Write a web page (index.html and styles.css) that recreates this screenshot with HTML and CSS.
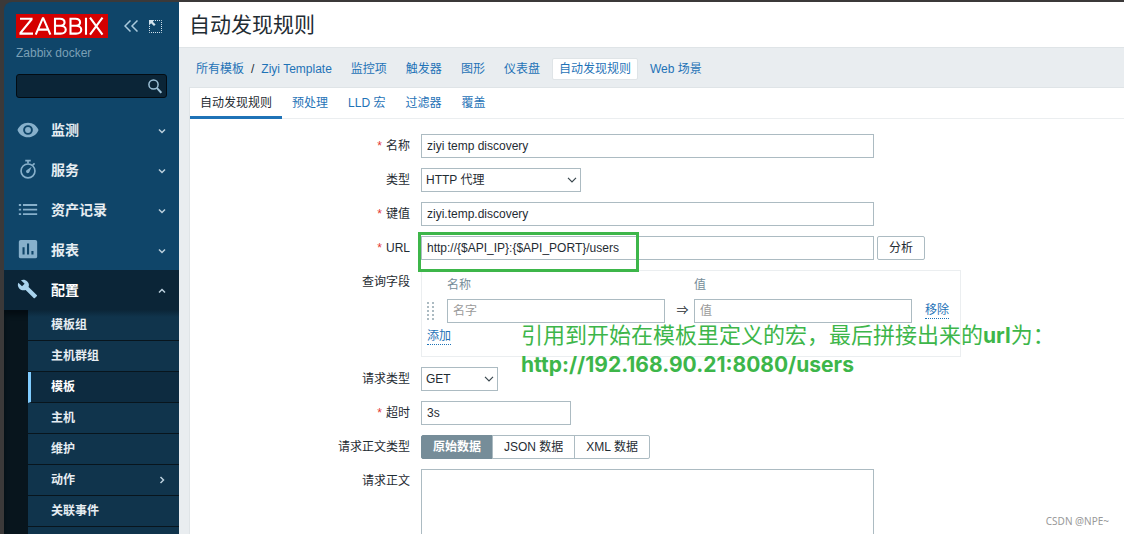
FILE: index.html
```html
<!DOCTYPE html>
<html lang="zh-CN">
<head>
<meta charset="utf-8">
<meta name="viewport" content="width=device-width, initial-scale=1">
<title>自动发现规则</title>
<link rel="stylesheet" href="styles.css">
</head>
<body>
<div class="app">
  <aside class="sidebar">
    <div class="brand">
      <a class="logo" href="#" aria-label="Zabbix">
        <svg width="92" height="24" viewBox="0 0 92 24" fill="none" stroke="#fff" stroke-width="2.1">
          <rect width="92" height="24" fill="#d40000" stroke="none"/>
          <path d="M4 4.700H15.500V5.500L4.500 18.800V19.600H17"/>
          <path d="M19.700 20.700L26.800 4.200H27.300L34.400 20.700M22.300 15.600H31.800"/>
          <path d="M39 4.700V19.600H44.500C51.500 19.600 51.500 11.800 44.500 11.800H39M44.500 11.800C50 11.800 50 4.700 44 4.700H38"/>
          <path d="M54.500 4.700V19.600H60C67 19.600 67 11.800 60 11.800H54.500M60 11.800C65.500 11.800 65.500 4.700 59.500 4.700H53.500"/>
          <path d="M70 3.700V20.700M74 3.700L86.500 20.700M86.500 3.700L74 20.700"/>
        </svg>
      </a>
      <button class="icon-button" aria-label="折叠">
        <svg width="14" height="12" viewBox="0 0 14 12" fill="none" stroke="#a9c9dc" stroke-width="1.500"><path d="M6.500 .5L1 6L6.500 11.500M13.500 .5L8 6L13.500 11.500"/></svg>
      </button>
      <button class="icon-button" aria-label="隐藏">
        <svg width="13" height="13" viewBox="0 0 13 13"><path d="M6 .5H12.500V12.500H.5V6" fill="none" stroke="#d2e2ec" stroke-dasharray="1 1"/><path d="M0 0H5.500L3.800 1.700L6.600 4.500L5 6L2.100 3.300L0 5.500Z" fill="#d2e2ec"/></svg>
      </button>
    </div>
    <div class="server">Zabbix docker</div>
    <form class="search">
      <input type="text" aria-label="搜索">
      <button class="icon-button" type="button" aria-label="搜索">
        <svg width="14" height="15" viewBox="0 0 14 15" fill="none" stroke="#9cc0d6"><circle cx="5.500" cy="5.500" r="4.600" stroke-width="1.500"/><path d="M8.800 8.900L13.300 13.800" stroke-width="2"/></svg>
      </button>
    </form>
    <nav class="menu">
      <a class="menu-item" href="#">
        <svg class="menu-icon" viewBox="0 0 24 24" fill="#87b0cb"><path d="M12 4C6.500 4 2.200 7.500 .5 12C2.200 16.500 6.500 20 12 20S21.800 16.500 23.500 12C21.800 7.500 17.500 4 12 4ZM12 17.300A5.300 5.300 0 1 1 12 6.700A5.300 5.300 0 0 1 12 17.300Z" fill-rule="evenodd"/><circle cx="12" cy="12" r="3.200"/></svg>
        <span>监测</span><svg class="caret" viewBox="0 0 8 8"><path d="M1 3.500L4 6.500L7 3.500"/></svg>
      </a>
      <a class="menu-item" href="#">
        <svg class="menu-icon" viewBox="0 0 24 24" fill="none" stroke="#87b0cb" stroke-width="1.800"><circle cx="12" cy="13" r="7.600"/><path d="M9 1.800H15M12 2V5M17 6.800L19.200 4.800"/><path d="M16 8.500L13.500 14.300A1.900 1.900 0 1 1 10.800 11.900Z" fill="#87b0cb" stroke="none"/></svg>
        <span>服务</span><svg class="caret" viewBox="0 0 8 8"><path d="M1 3.500L4 6.500L7 3.500"/></svg>
      </a>
      <a class="menu-item" href="#">
        <svg class="menu-icon" viewBox="0 0 24 24" fill="#87b0cb"><path d="M2 5.500H4.500V7.500H2ZM6.500 5.500H22V7.500H6.500ZM2 10.500H4.500V12.500H2ZM6.500 10.500H22V12.500H6.500ZM2 15.500H4.500V17.500H2ZM6.500 15.500H22V17.500H6.500Z"/></svg>
        <span>资产记录</span><svg class="caret" viewBox="0 0 8 8"><path d="M1 3.500L4 6.500L7 3.500"/></svg>
      </a>
      <a class="menu-item" href="#">
        <svg class="menu-icon" viewBox="0 0 24 24" fill="#87b0cb"><rect x="2" y="1" width="20" height="20" rx="2"/><path d="M6 9H8.300V17H6ZM10.900 5H13.200V17H10.900ZM15.700 13H18V17H15.700Z" fill="#0f4569"/></svg>
        <span>报表</span><svg class="caret" viewBox="0 0 8 8"><path d="M1 3.500L4 6.500L7 3.500"/></svg>
      </a>
      <a class="menu-item menu-item-open" href="#">
        <svg class="menu-icon" viewBox="0 0 24 24" fill="#a9d4ee"><path d="M21.500 17.500L12.600 8.700C13.500 6.400 13 4.300 11.200 2.600C9.300 .7 6.500 .4 4.300 1.400L8.300 5.200L5.500 8L1.500 4.100C.4 6.400 .9 8.700 2.700 10.500C4.500 12.300 7.100 12.700 9.400 11.900L18.200 20.700C18.600 21.100 19.200 21.100 19.600 20.700L21.500 18.800C22 18.500 22 17.900 21.500 17.500Z"/></svg>
        <span>配置</span><svg class="caret" viewBox="0 0 8 8"><path d="M1 6.500L4 3.500L7 6.500"/></svg>
      </a>
      <div class="submenu">
        <a href="#">模板组</a>
        <a href="#">主机群组</a>
        <a class="current" href="#">模板</a>
        <a href="#">主机</a>
        <a href="#">维护</a>
        <a href="#">动作<svg class="caret" viewBox="0 0 8 8"><path d="M2.500 1L5.500 4L2.500 7"/></svg></a>
        <a href="#">关联事件</a>
        <div class="submenu-rest"></div>
      </div>
    </nav>
  </aside>

  <main class="main">
    <header class="page-header"><h1>自动发现规则</h1></header>
    <nav class="crumbs">
      <div class="path"><a href="#">所有模板</a><span>/</span><a href="#">Ziyi Template</a></div>
      <a href="#">监控项</a>
      <a href="#">触发器</a>
      <a href="#">图形</a>
      <a href="#">仪表盘</a>
      <a class="selected" href="#">自动发现规则</a>
      <a href="#">Web 场景</a>
    </nav>
    <section class="panel">
      <nav class="tabs">
        <a class="active" href="#">自动发现规则</a>
        <a href="#">预处理</a>
        <a href="#">LLD 宏</a>
        <a href="#">过滤器</a>
        <a href="#">覆盖</a>
      </nav>
      <form class="form">
        <label class="required" for="name">名称</label>
        <div class="field"><input class="box wide" id="name" type="text" value="ziyi temp discovery"></div>

        <label for="type">类型</label>
        <div class="field"><div class="select type-select"><select id="type"><option>HTTP 代理</option></select><svg viewBox="0 0 10 6"><path d="M1 .8L5 4.800L9 .8"/></svg></div></div>

        <label class="required" for="key">键值</label>
        <div class="field"><input class="box wide" id="key" type="text" value="ziyi.temp.discovery"></div>

        <label class="required" for="url">URL</label>
        <div class="field url-field"><input class="box wide" id="url" type="text" value="http://{$API_IP}:{$API_PORT}/users"><button class="button" type="button">分析</button><div class="highlight"></div></div>

        <div class="label">查询字段</div>
        <div class="field query">
          <table class="query-table">
            <thead><tr><th class="col-handle"></th><th class="col-input">名称</th><th class="col-arrow"></th><th class="col-input">值</th><th></th></tr></thead>
            <tbody>
              <tr>
                <td><svg class="handle" width="7" height="18" viewBox="0 0 7 18"><path d="M1 0V18M6 0V18" stroke="#acbbc2" stroke-width="2" stroke-dasharray="2 2"/></svg></td>
                <td><input class="box full" type="text" placeholder="名字" aria-label="名称"></td>
                <td class="arrow">⇒</td>
                <td><input class="box full" type="text" placeholder="值" aria-label="值"></td>
                <td class="remove"><a class="dotted" href="#">移除</a></td>
              </tr>
              <tr><td class="add" colspan="5"><a class="dotted" href="#">添加</a></td></tr>
            </tbody>
          </table>
          <div class="note">引用到开始在模板里定义的宏，最后拼接出来的<b>url</b>为：<br><b>http://192.168.90.21:8080/users</b></div>
        </div>

        <label for="method">请求类型</label>
        <div class="field"><div class="select method-select"><select id="method"><option>GET</option></select><svg viewBox="0 0 10 6"><path d="M1 .8L5 4.800L9 .8"/></svg></div></div>

        <label class="required" for="timeout">超时</label>
        <div class="field"><input class="box short" id="timeout" type="text" value="3s"></div>

        <div class="label">请求正文类型</div>
        <div class="field segments">
          <input type="radio" name="body" id="raw" checked><label for="raw">原始数据</label>
          <input type="radio" name="body" id="json"><label for="json">JSON 数据</label>
          <input type="radio" name="body" id="xml"><label for="xml">XML 数据</label>
        </div>

        <label for="content">请求正文</label>
        <div class="field"><textarea class="box wide" id="content"></textarea></div>
      </form>
    </section>
  </main>
  <div class="watermark">CSDN @NPE~</div>
</div>
</body>
</html>
```

FILE: styles.css
```css
* { box-sizing: border-box; }

body {
  margin: 0;
  background: #3b3939;
  color: #1f2c33;
  font: 12px/16px "Liberation Sans", "Noto Sans CJK SC", sans-serif;
}

input, select, button, textarea { font: inherit; color: inherit; margin: 0; }
a { color: #1f73b7; text-decoration: none; }

.app {
  display: flex;
  height: 100vh;
  padding: 2px 0 0 4px;
  overflow: hidden;
}

/* Sidebar */
.sidebar {
  display: flex;
  flex-direction: column;
  flex: 0 0 175px;
  background: #0f4569;
  border-top-left-radius: 8px;
  overflow: hidden;
}
.brand { display: flex; align-items: center; padding: 12px 0 0 12px; }
.logo { display: flex; margin-right: 16px; }
.icon-button {
  display: flex;
  padding: 0;
  margin-right: 11px;
  border: 0;
  background: none;
}
.server { padding: 7px 12px 0; color: #7ba0b6; }
.search {
  display: flex;
  align-items: center;
  height: 24px;
  margin: 13px 12px 12px;
  background: #0b2537;
  border: 1px solid #030c13;
  border-radius: 3px;
}
.search input {
  flex: 1;
  min-width: 0;
  border: 0;
  padding: 0 6px;
  background: none;
  color: #fff;
}
.search .icon-button { margin-right: 4px; }

.menu { display: flex; flex-direction: column; flex: 1; }
.menu-item {
  display: flex;
  align-items: center;
  height: 40px;
  padding: 0 13px;
  color: #e6edf2;
  font-size: 14px;
  font-weight: 600;
}
.menu-item span { flex: 1; }
.menu-icon { width: 22px; height: 22px; margin-right: 12px; }
.caret {
  width: 8px;
  height: 8px;
  fill: none;
  stroke: #bcd0dd;
  stroke-width: 1.5;
}
.menu-item-open { background: #0b2537; color: #fff; }
.submenu {
  display: flex;
  flex-direction: column;
  flex: 1;
  padding-left: 24px;
  background: #08151d;
  box-shadow: inset 0 5px 5px #040d13;
}
.submenu a {
  display: flex;
  align-items: center;
  justify-content: space-between;
  height: 31px;
  padding: 0 13px 0 23px;
  background: #10344c;
  border-bottom: 1px solid #08151d;
  color: #e6edf2;
  font-weight: 600;
}
.submenu a:first-child { background: linear-gradient(#0b2537, #10344c 7px); }
.submenu .current {
  padding-left: 20px;
  border-left: 3px solid #80ccff;
  background: #0d2b40;
  color: #fff;
}
.submenu-rest { flex: 1; background: #10344c; }

/* Page heading and navigation */
.main { flex: 1; min-width: 0; background: #e9edf0; }
.page-header {
  height: 46px;
  padding: 8px 10px 0;
  background: #fff;
  border-bottom: 1px solid #dfe4e7;
}
.page-header h1 { margin: 0; font-size: 21px; line-height: 30px; font-weight: 400; }
.crumbs { display: flex; align-items: center; gap: 5px; height: 39px; padding: 3px 10px 0; }
.crumbs > * { padding: 2px 6px; border: 1px solid transparent; }
.path { display: flex; gap: 7px; }
.crumbs .selected { background: #fff; border-color: #dfe4e7; border-radius: 2px; }

.panel {
  min-height: 100%;
  margin-left: 10px;
  background: #fff;
  border: solid #dfe4e7;
  border-width: 1px 0 0 1px;
}
.tabs { display: flex; height: 31px; border-bottom: 1px solid #ebeef0; }
.tabs a { height: 31px; padding: 7px 10px 0; }
.tabs .active { color: #1f2c33; border-bottom: 3px solid #1f73b7; }

/* Form */
.form {
  display: grid;
  grid-template-columns: 220px minmax(0, 1fr);
  column-gap: 11px;
  row-gap: 10px;
  padding: 15px 0;
}
.form > label, .label { padding-top: 4px; text-align: right; }
.required::before { content: "*"; margin-right: 4px; color: #e33734; }
.field { display: flex; }
.box {
  height: 24px;
  padding: 0 5px;
  background: #fff;
  border: 1px solid #acbbc2;
  border-radius: 0;
}
.box::placeholder { color: #9a9a9a; }
.wide { width: 453px; }
.short { width: 150px; }
.full { display: block; width: 100%; }
textarea.box { height: 120px; resize: none; }

.select { position: relative; }
.select select {
  width: 100%;
  height: 24px;
  padding: 0 4px;
  appearance: none;
  background: #fff;
  border: 1px solid #acbbc2;
  border-radius: 0;
}
.select svg {
  position: absolute;
  top: 9px;
  right: 4px;
  width: 10px;
  height: 6px;
  fill: none;
  stroke: #3a474e;
  stroke-width: 1.2;
  pointer-events: none;
}
.type-select { width: 160px; }
.method-select { width: 77px; }

.button {
  height: 24px;
  margin-left: 3px;
  padding: 0 11px;
  background: #fff;
  border: 1px solid #acbbc2;
  border-radius: 2px;
}
.url-field { position: relative; z-index: 1; }
.highlight {
  position: absolute;
  top: -4px;
  left: -3px;
  width: 221px;
  height: 40px;
  border: 3px solid #3db64a;
  pointer-events: none;
}

.query { position: relative; }
.query-table {
  width: 540px;
  padding: 4px 5px 11px;
  table-layout: fixed;
  border: 1px solid #ebeef0;
  border-spacing: 0;
}
.query-table th {
  height: 24px;
  padding: 2px 0 0;
  text-align: left;
  vertical-align: top;
  font-weight: 400;
  color: #768d99;
}
.query-table td { padding: 0; }
.col-handle { width: 20px; }
.col-input { width: 218px; }
.col-arrow { width: 29px; }
.handle { display: block; }
.query-table .arrow { padding-left: 6px; text-align: center; }
.query-table .remove { padding-left: 13px; }
.query-table .add { height: 22px; padding-top: 6px; }
.dotted { display: block; width: max-content; line-height: 15px; border-bottom: 1px dotted #1f73b7; }
.note {
  position: absolute;
  top: 51px;
  left: 100px;
  color: #3db64a;
  font: 22px/29px Inter, "Noto Sans CJK SC", sans-serif;
  white-space: nowrap;
}
.note b { font-size: 21px; font-weight: 700; }

.segments input { position: absolute; opacity: 0; }
.segments label {
  height: 24px;
  margin-left: -1px;
  padding: 3px 11px;
  border: 1px solid #acbbc2;
}
.segments label:first-of-type { margin-left: 0; border-radius: 2px 0 0 2px; }
.segments label:last-of-type { border-radius: 0 2px 2px 0; }
.segments input:checked + label { background: #768d99; border-color: #768d99; color: #fff; font-weight: 600; }

.watermark {
  position: absolute;
  right: 15px;
  bottom: 6px;
  color: #999;
  font: 10px/14px "Noto Sans", sans-serif;
}
```
